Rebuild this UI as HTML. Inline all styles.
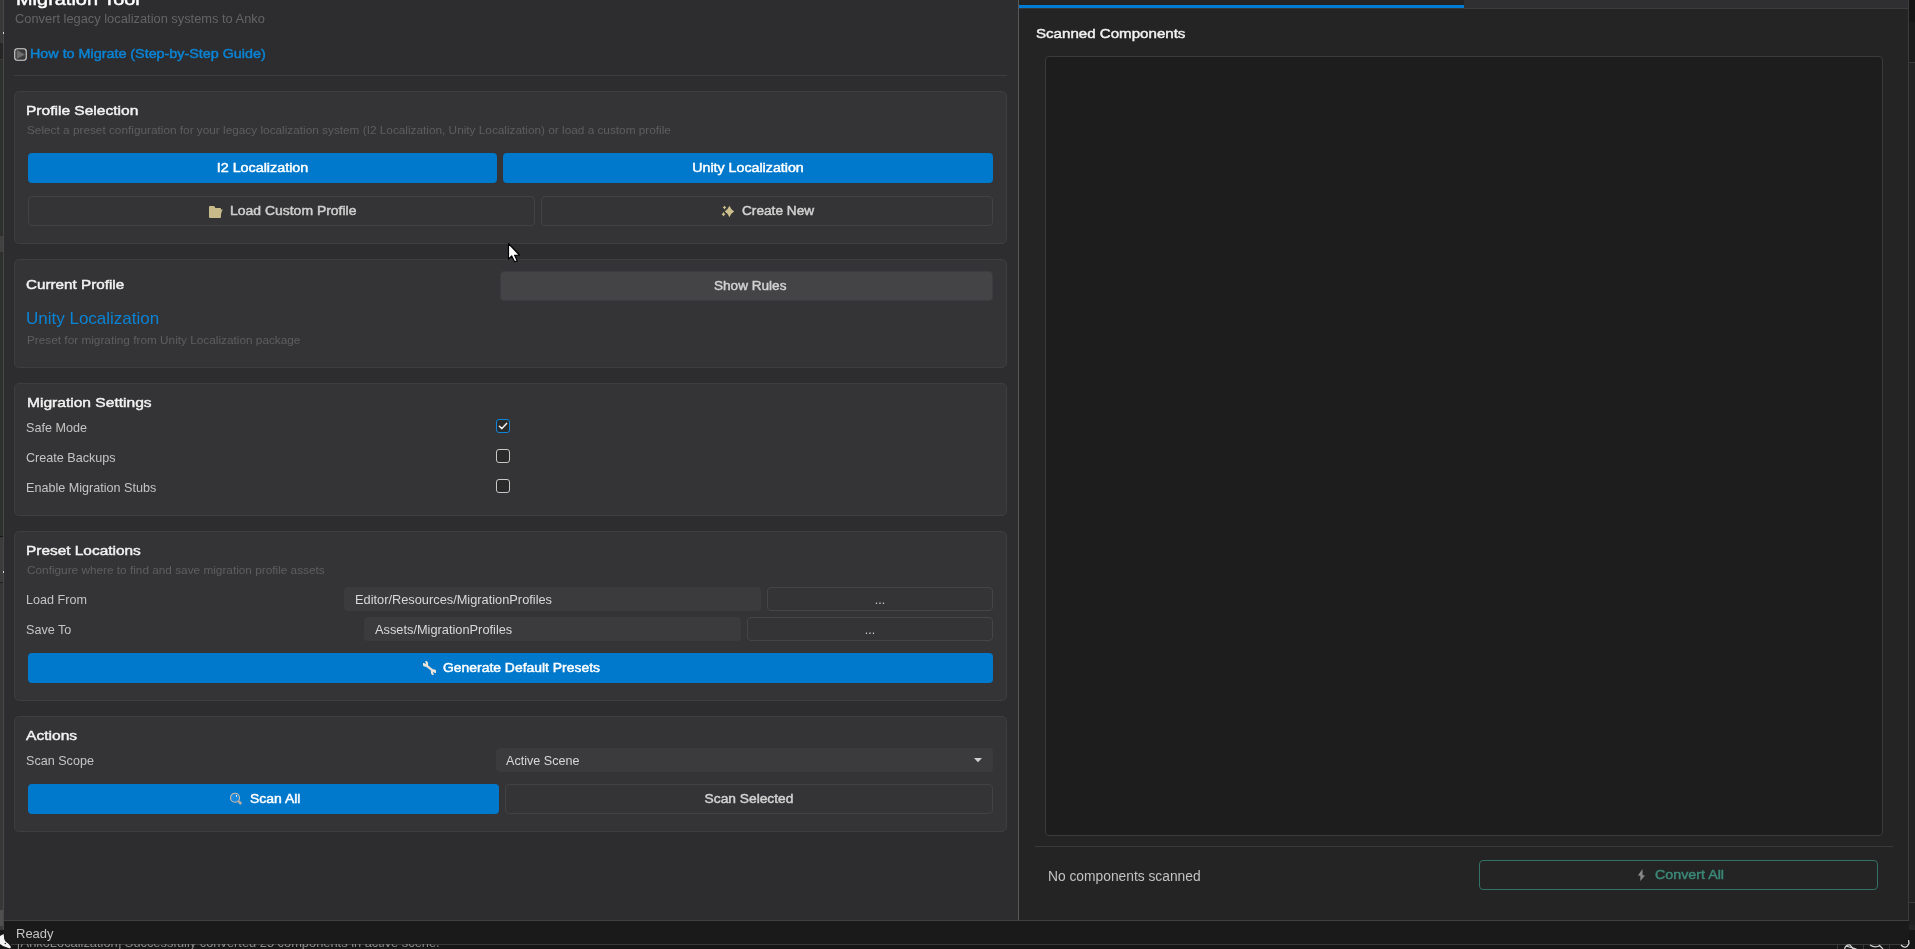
<!DOCTYPE html><html><head><meta charset="utf-8"><style>
html,body{margin:0;padding:0;width:1915px;height:949px;overflow:hidden;background:#2d2d2f;font-family:"Liberation Sans",sans-serif;}
.t{position:absolute;white-space:nowrap;line-height:1;will-change:transform;}
.r{position:absolute;box-sizing:border-box;}
svg{position:absolute;}
</style></head><body>
<div class="r" style="left:0px;top:0px;width:3px;height:43px;background:#383838"></div>
<div class="r" style="left:0px;top:43px;width:3px;height:16px;background:#262626"></div>
<div class="r" style="left:0px;top:59px;width:3px;height:1px;background:#3a3a3a"></div>
<div class="r" style="left:0px;top:60px;width:3px;height:176px;background:#2e302e"></div>
<div class="r" style="left:0px;top:236px;width:3px;height:16px;background:#414141"></div>
<div class="r" style="left:0px;top:252px;width:3px;height:284px;background:#2e302e"></div>
<div class="r" style="left:0px;top:536px;width:3px;height:1px;background:#151515"></div>
<div class="r" style="left:0px;top:537px;width:3px;height:45px;background:#3b3b3b"></div>
<div class="r" style="left:0px;top:582px;width:3px;height:1px;background:#202020"></div>
<div class="r" style="left:0px;top:583px;width:3px;height:327px;background:#373737"></div>
<div class="r" style="left:0px;top:910px;width:3px;height:16px;background:#505050"></div>
<div class="r" style="left:0px;top:926px;width:3px;height:4px;background:#3a3a3a"></div>
<div class="r" style="left:0px;top:930px;width:3px;height:19px;background:#161616"></div>
<div class="r" style="left:3px;top:0px;width:1px;height:930px;background:#484848"></div>
<div class="r" style="left:3px;top:32px;width:1px;height:2px;background:#d8d8d8"></div>
<div class="r" style="left:3px;top:571px;width:1px;height:2px;background:#d8d8d8"></div>
<div class="r" style="left:4px;top:0px;width:1014px;height:920px;background:#2d2d2f"></div>
<div class="t" style="left:15.5px;top:-9px;color:#ffffff;font-size:17.0px;font-weight:400;-webkit-text-stroke:0.45px #ffffff;transform:scaleX(1.1731);transform-origin:left center;">Migration Tool</div>
<div class="t" style="left:15px;top:13px;color:#646466;font-size:12.85px;font-weight:400;">Convert legacy localization systems to Anko</div>
<svg style="left:14px;top:48px" width="13" height="13" viewBox="0 0 13 13"><rect x="0.75" y="0.75" width="11.5" height="11.5" rx="2.5" fill="#3a3a3a" stroke="#d6d6d6" stroke-width="1.1"/><path d="M2.7 2.1 L11 6.5 L2.7 10.9 Z" fill="#6e6e6e"/></svg>
<div class="t" style="left:30px;top:48px;color:#0a84d6;font-size:12.8px;font-weight:400;-webkit-text-stroke:0.45px #0a84d6;transform:scaleX(1.1196);transform-origin:left center;">How to Migrate (Step-by-Step Guide)</div>
<div class="r" style="left:14px;top:75px;width:993px;height:1px;background:#3d3d3f"></div>
<div class="r" style="left:14px;top:91px;width:993px;height:153px;background:#343436;border:1px solid #3e3e40;border-radius:5px"></div>
<div class="t" style="left:26px;top:104px;color:#f2f2f2;font-size:13.37px;font-weight:400;-webkit-text-stroke:0.45px #f2f2f2;transform:scaleX(1.1632);transform-origin:left center;">Profile Selection</div>
<div class="t" style="left:27px;top:125px;color:#5e5e60;font-size:11.8px;font-weight:400;">Select a preset configuration for your legacy localization system (I2 Localization, Unity Localization) or load a custom profile</div>
<div class="r" style="left:28px;top:153px;width:469px;height:30px;background:#0078cc;border-radius:4px"></div>
<div class="t" style="left:28px;width:469px;text-align:center;top:162px;color:#ffffff;font-size:12.41px;font-weight:400;-webkit-text-stroke:0.45px #ffffff;transform:scaleX(1.1538);transform-origin:center center;">I2 Localization</div>
<div class="r" style="left:503px;top:153px;width:490px;height:30px;background:#0078cc;border-radius:4px"></div>
<div class="t" style="left:503px;width:490px;text-align:center;top:162px;color:#ffffff;font-size:12.41px;font-weight:400;-webkit-text-stroke:0.45px #ffffff;transform:scaleX(1.1464);transform-origin:center center;">Unity Localization</div>
<div class="r" style="left:28px;top:196px;width:507px;height:30px;border:1px solid #424244;border-radius:4px"></div>
<div class="r" style="left:541px;top:196px;width:452px;height:30px;border:1px solid #424244;border-radius:4px"></div>
<svg style="left:208px;top:205px" width="16" height="14" viewBox="0 0 16 14"><path d="M1 2 Q1 1 2 1 L6.2 1 L7.4 3 L12.2 3 Q13 3 13 3.8 L13 4.8 L15 4.4 L13.8 6.2 L13 9.5 L13 12 Q13 13 12 13 L2 13 Q1 13 1 12 Z" fill="#c8bb89"/></svg>
<div class="t" style="left:229.6px;top:205px;color:#cfcfcf;font-size:12.41px;font-weight:400;-webkit-text-stroke:0.45px #cfcfcf;transform:scaleX(1.1250);transform-origin:left center;">Load Custom Profile</div>
<svg style="left:718px;top:202px" width="20" height="18" viewBox="0 0 20 18"><path d="M11.4 3.8 Q12.90 7.68 16.1 9.5 Q12.90 11.32 11.4 15.2 Q9.90 11.32 6.7 9.5 Q9.90 7.68 11.4 3.8 Z M6.5 3.6 Q7.07 4.93 8.4 5.5 Q7.07 6.07 6.5 7.4 Q5.93 6.07 4.6 5.5 Q5.93 4.93 6.5 3.6 Z M5.5 10.100000000000001 Q6.07 11.64 7.4 12.3 Q6.07 12.96 5.5 14.5 Q4.93 12.96 3.6 12.3 Q4.93 11.64 5.5 10.100000000000001 Z" fill="#cdbf8c"/></svg>
<div class="t" style="left:741.6px;top:205px;color:#d2d2d2;font-size:12.41px;font-weight:400;-webkit-text-stroke:0.45px #d2d2d2;transform:scaleX(1.1015);transform-origin:left center;">Create New</div>
<div class="r" style="left:14px;top:259px;width:993px;height:109px;background:#343436;border:1px solid #3e3e40;border-radius:5px"></div>
<div class="t" style="left:26px;top:278px;color:#f2f2f2;font-size:13.37px;font-weight:400;-webkit-text-stroke:0.45px #f2f2f2;transform:scaleX(1.1395);transform-origin:left center;">Current Profile</div>
<div class="r" style="left:500px;top:271px;width:493px;height:30px;background:#444446;border:1px solid #3c3c40;border-radius:4px"></div>
<div class="t" style="left:713.7px;top:280px;color:#d2d2d2;font-size:12.41px;font-weight:400;-webkit-text-stroke:0.45px #d2d2d2;transform:scaleX(1.0939);transform-origin:left center;">Show Rules</div>
<div class="t" style="left:26px;top:310px;color:#0a84d6;font-size:17px;font-weight:400;">Unity Localization</div>
<div class="t" style="left:27px;top:335px;color:#5e5e60;font-size:11.8px;font-weight:400;">Preset for migrating from Unity Localization package</div>
<div class="r" style="left:14px;top:383px;width:993px;height:133px;background:#343436;border:1px solid #3e3e40;border-radius:5px"></div>
<div class="t" style="left:26.6px;top:396px;color:#f2f2f2;font-size:13.37px;font-weight:400;-webkit-text-stroke:0.45px #f2f2f2;transform:scaleX(1.1651);transform-origin:left center;">Migration Settings</div>
<div class="t" style="left:26px;top:422px;color:#c4c4c4;font-size:12.6px;font-weight:400;">Safe Mode</div>
<div class="t" style="left:26px;top:452px;color:#c4c4c4;font-size:12.6px;font-weight:400;">Create Backups</div>
<div class="t" style="left:26px;top:482px;color:#c4c4c4;font-size:12.6px;font-weight:400;">Enable Migration Stubs</div>
<div class="r" style="left:496px;top:419px;width:14px;height:14px;background:#2a2a2a;border:1px solid #0f86dc;border-radius:3px"></div>
<svg style="left:496px;top:419px" width="14" height="14" viewBox="0 0 14 14"><path d="M3.4 7.2 L5.9 9.6 L10.6 4.4" fill="none" stroke="#f0f0f0" stroke-width="1.5" stroke-linecap="round" stroke-linejoin="round"/></svg>
<div class="r" style="left:496px;top:449px;width:14px;height:14px;background:#2a2a2a;border:1px solid #c8c8c8;border-radius:3px"></div>
<div class="r" style="left:496px;top:479px;width:14px;height:14px;background:#2a2a2a;border:1px solid #c8c8c8;border-radius:3px"></div>
<div class="r" style="left:14px;top:531px;width:993px;height:170px;background:#343436;border:1px solid #3e3e40;border-radius:5px"></div>
<div class="t" style="left:26px;top:544px;color:#f2f2f2;font-size:13.37px;font-weight:400;-webkit-text-stroke:0.45px #f2f2f2;transform:scaleX(1.1531);transform-origin:left center;">Preset Locations</div>
<div class="t" style="left:27px;top:565px;color:#5e5e60;font-size:11.8px;font-weight:400;">Configure where to find and save migration profile assets</div>
<div class="t" style="left:26px;top:594px;color:#c4c4c4;font-size:12.6px;font-weight:400;">Load From</div>
<div class="t" style="left:26px;top:624px;color:#c4c4c4;font-size:12.6px;font-weight:400;">Save To</div>
<div class="r" style="left:344px;top:587px;width:417px;height:24px;background:#3b3b3d;border-radius:4px"></div>
<div class="t" style="left:355px;top:594px;color:#d8d8d8;font-size:12.8px;font-weight:400;">Editor/Resources/MigrationProfiles</div>
<div class="r" style="left:767px;top:587px;width:226px;height:24px;border:1px solid #454547;border-radius:4px"></div>
<div class="t" style="left:767px;width:226px;text-align:center;top:594px;color:#d0d0d0;font-size:12.5px;font-weight:400;">...</div>
<div class="r" style="left:364px;top:617px;width:377px;height:24px;background:#3b3b3d;border-radius:4px"></div>
<div class="t" style="left:375px;top:624px;color:#d8d8d8;font-size:12.8px;font-weight:400;">Assets/MigrationProfiles</div>
<div class="r" style="left:747px;top:617px;width:246px;height:24px;border:1px solid #454547;border-radius:4px"></div>
<div class="t" style="left:747px;width:246px;text-align:center;top:624px;color:#d0d0d0;font-size:12.5px;font-weight:400;">...</div>
<div class="r" style="left:28px;top:653px;width:965px;height:30px;background:#0078cc;border-radius:4px"></div>
<svg style="left:418px;top:657px" width="22" height="22" viewBox="0 0 22 22"><path d="M5 6 L6.6 6 L6.9 7 L7.8 6.9 L7.3 4 L8.8 4 L10 5.5 L10.2 8.8 L9.5 10 L6 9.5 L5 8.5 Z M18 16 L16.4 16 L16.1 15 L15.2 15.1 L15.7 18 L14.2 18 L13 16.5 L12.8 13.2 L13.5 12 L17 12.5 L18 13.5 Z" fill="#ece4d8"/><path d="M8.8 8.8 L14.2 13.2" stroke="#e6e0d8" stroke-width="2.3"/></svg>
<div class="t" style="left:443.2px;top:662px;color:#ffffff;font-size:12.41px;font-weight:400;-webkit-text-stroke:0.45px #ffffff;transform:scaleX(1.1214);transform-origin:left center;">Generate Default Presets</div>
<div class="r" style="left:14px;top:716px;width:993px;height:116px;background:#343436;border:1px solid #3e3e40;border-radius:5px"></div>
<div class="t" style="left:26px;top:729px;color:#f2f2f2;font-size:13.37px;font-weight:400;-webkit-text-stroke:0.45px #f2f2f2;transform:scaleX(1.1682);transform-origin:left center;">Actions</div>
<div class="t" style="left:26px;top:755px;color:#c4c4c4;font-size:12.6px;font-weight:400;">Scan Scope</div>
<div class="r" style="left:496px;top:748px;width:497px;height:24px;background:#3b3b3d;border-radius:4px"></div>
<div class="t" style="left:505.5px;top:755px;color:#d8d8d8;font-size:12.6px;font-weight:400;">Active Scene</div>
<svg style="left:973px;top:757px" width="10" height="6" viewBox="0 0 10 6"><path d="M1 1 L9 1 L5 5.3 Z" fill="#d0d0d0"/></svg>
<div class="r" style="left:28px;top:784px;width:471px;height:30px;background:#0078cc;border-radius:4px"></div>
<svg style="left:225px;top:788px" width="22" height="22" viewBox="0 0 22 22"><circle cx="10" cy="9.7" r="4.5" fill="#1a8ade" stroke="#d6bea6" stroke-width="1.1"/><rect x="11.1" y="7" width="0.9" height="1.8" fill="#ffffff"/><path d="M13.4 13.2 L16.2 16" stroke="#b8aca4" stroke-width="2.6"/></svg>
<div class="t" style="left:249.7px;top:793px;color:#ffffff;font-size:12.41px;font-weight:400;-webkit-text-stroke:0.45px #ffffff;transform:scaleX(1.1250);transform-origin:left center;">Scan All</div>
<div class="r" style="left:505px;top:784px;width:488px;height:30px;border:1px solid #424244;border-radius:4px"></div>
<div class="t" style="left:505px;width:488px;text-align:center;top:793px;color:#d2d2d2;font-size:12.41px;font-weight:400;-webkit-text-stroke:0.45px #d2d2d2;transform:scaleX(1.1100);transform-origin:center center;">Scan Selected</div>
<div class="r" style="left:1018px;top:0px;width:1px;height:920px;background:#585858"></div>
<div class="r" style="left:1019px;top:0px;width:889px;height:920px;background:#242424"></div>
<div class="r" style="left:1019px;top:5px;width:445px;height:3px;background:#007bd4"></div>
<div class="r" style="left:1019px;top:8px;width:445px;height:1px;background:#36363a"></div>
<div class="r" style="left:1464px;top:0px;width:444px;height:8px;background:#2f2f31"></div>
<div class="r" style="left:1464px;top:8px;width:444px;height:1px;background:#3c3c3e"></div>
<div class="t" style="left:1036.2px;top:27px;color:#f2f2f2;font-size:13.37px;font-weight:400;-webkit-text-stroke:0.45px #f2f2f2;transform:scaleX(1.1303);transform-origin:left center;">Scanned Components</div>
<div class="r" style="left:1045px;top:56px;width:838px;height:780px;background:#1d1d1d;border:1px solid #3b3b3f;border-radius:4px"></div>
<div class="r" style="left:1035px;top:846px;width:858px;height:1px;background:#3a3a3c"></div>
<div class="t" style="left:1048.3px;top:870px;color:#c2c2c2;font-size:13.8px;font-weight:400;">No components scanned</div>
<div class="r" style="left:1479px;top:860px;width:399px;height:30px;border:1px solid #327264;border-radius:4px"></div>
<svg style="left:1632px;top:864px" width="20" height="22" viewBox="0 0 20 22"><path d="M10.5 4.9 L5.9 11.5 L8.4 11.8 L8.3 16.9 L13 11.5 L10.6 11.2 Z" fill="#8a8a8a"/></svg>
<div class="t" style="left:1655px;top:869px;color:#3b8877;font-size:12.41px;font-weight:400;-webkit-text-stroke:0.45px #3b8877;transform:scaleX(1.1500);transform-origin:left center;">Convert All</div>
<div class="r" style="left:1908px;top:0px;width:1px;height:949px;background:#3c3c3c"></div>
<div class="r" style="left:1909px;top:0px;width:6px;height:22px;background:#151515"></div>
<div class="r" style="left:1909px;top:22px;width:6px;height:40px;background:#1b1b1b"></div>
<div class="r" style="left:1909px;top:62px;width:6px;height:1px;background:#3a3a3a"></div>
<div class="r" style="left:1909px;top:63px;width:6px;height:839px;background:#232323"></div>
<div class="r" style="left:1909px;top:902px;width:6px;height:1px;background:#3a3a3a"></div>
<div class="r" style="left:1909px;top:903px;width:6px;height:27px;background:#202020"></div>
<div class="r" style="left:0px;top:930px;width:1915px;height:19px;background:#161616"></div>
<div class="r" style="left:11px;top:944px;width:1898px;height:1px;background:#3a3a3a"></div>
<div class="r" style="left:1909px;top:925px;width:6px;height:5px;background:#252525"></div>
<div class="t" style="left:17px;top:937px;color:#8a8a8a;font-size:12.85px;font-weight:400;">[AnkoLocalization] Successfully converted 25 components in active scene.</div>
<div class="r" style="left:1837px;top:944px;width:1px;height:5px;background:#3a3a3a"></div>
<div class="r" style="left:1863px;top:944px;width:1px;height:5px;background:#3a3a3a"></div>
<div class="r" style="left:1889px;top:944px;width:1px;height:5px;background:#3a3a3a"></div>
<svg style="left:1840px;top:940px" width="75" height="9" viewBox="0 0 75 9"><path d="M4.5 9 Q6 4.5 10 5 L13.5 9" fill="none" stroke="#d0d0d0" stroke-width="1.3"/><path d="M6 6 L16.5 9" stroke="#d0d0d0" stroke-width="1.2"/><path d="M30 5 Q35 8.5 40 5.5" fill="none" stroke="#d0d0d0" stroke-width="1.4"/><path d="M39 5 L43 9" stroke="#d0d0d0" stroke-width="1.2"/><path d="M61 5 Q66 10 69 3.5 L68.5 0" fill="none" stroke="#d8d8d8" stroke-width="1.3"/></svg>
<svg style="left:0px;top:932px" width="14" height="17" viewBox="0 0 14 17"><path d="M0 4 L3.6 2 L4.2 6 L5.6 9 L8 11 L11 15 L10 16.5 L3 14 L0 12 Z" fill="#f4f4f4"/><circle cx="5.3" cy="11.5" r="0.7" fill="#222"/></svg>
<div class="r" style="left:4px;top:920px;width:1905px;height:24px;background:#1a1a1a;border-top:1px solid #3f3f41;border-radius:0 0 7px 7px"></div>
<div class="t" style="left:15.5px;top:927px;color:#c4c4c4;font-size:13px;font-weight:400;">Ready</div>
<svg style="left:507px;top:242px" width="16" height="22" viewBox="0 0 16 22"><path d="M1.5 1.5 L1.5 17.2 L4.7 14 L7.6 19.8 L10.2 18.8 L7.6 13.3 L12.4 13 Z" fill="#ffffff" stroke="#000000" stroke-width="1.2" stroke-linejoin="round"/></svg>
</body></html>
